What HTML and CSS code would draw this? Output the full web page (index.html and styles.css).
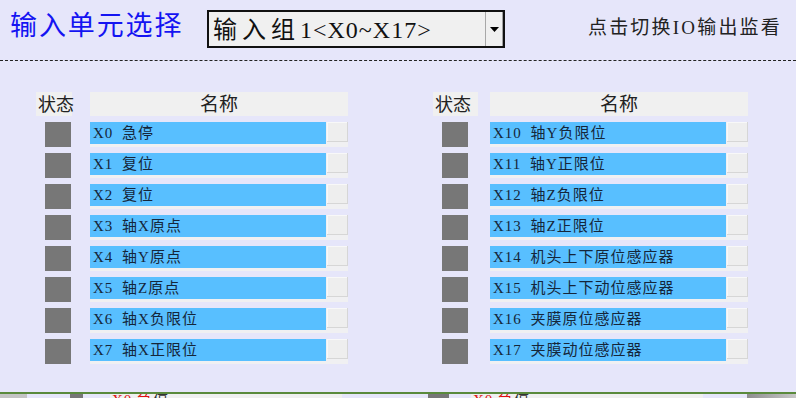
FILE: index.html
```html
<!DOCTYPE html>
<html lang="zh-CN">
<head>
<meta charset="utf-8">
<title>输入单元选择</title>
<link rel="stylesheet" href="styles.css">
</head>
<body>
<div class="page">
  <header class="topbar">
    <h1 class="title">输入单元选择</h1>
    <div class="select">
      <span class="select-text"><span class="sel-cjk">输入组</span><span class="sel-latin">1&lt;X0~X17&gt;</span></span>
      <span class="select-btn"><svg width="9" height="5" viewBox="0 0 9 5"><path d="M0 0H9L4.5 5Z" fill="#000"/></svg></span>
    </div>
    <div class="monitor">点击切换IO输出监看</div>
  </header>

  <main class="panels">
    <section class="panel panel-left">
      <div class="hd hd-status">状态</div><div class="hd hd-name">名称</div>
      <div class="lamp"></div><div class="name"><span class="bar">X0 急停</span><span class="btn"></span></div>
      <div class="lamp"></div><div class="name"><span class="bar">X1 复位</span><span class="btn"></span></div>
      <div class="lamp"></div><div class="name"><span class="bar">X2 复位</span><span class="btn"></span></div>
      <div class="lamp"></div><div class="name"><span class="bar">X3 轴X原点</span><span class="btn"></span></div>
      <div class="lamp"></div><div class="name"><span class="bar">X4 轴Y原点</span><span class="btn"></span></div>
      <div class="lamp"></div><div class="name"><span class="bar">X5 轴Z原点</span><span class="btn"></span></div>
      <div class="lamp"></div><div class="name"><span class="bar">X6 轴X负限位</span><span class="btn"></span></div>
      <div class="lamp"></div><div class="name"><span class="bar">X7 轴X正限位</span><span class="btn"></span></div>
    </section>
    <section class="panel panel-right">
      <div class="hd hd-status">状态</div><div class="hd hd-name">名称</div>
      <div class="lamp"></div><div class="name"><span class="bar">X10 轴Y负限位</span><span class="btn"></span></div>
      <div class="lamp"></div><div class="name"><span class="bar">X11 轴Y正限位</span><span class="btn"></span></div>
      <div class="lamp"></div><div class="name"><span class="bar">X12 轴Z负限位</span><span class="btn"></span></div>
      <div class="lamp"></div><div class="name"><span class="bar">X13 轴Z正限位</span><span class="btn"></span></div>
      <div class="lamp"></div><div class="name"><span class="bar">X14 机头上下原位感应器</span><span class="btn"></span></div>
      <div class="lamp"></div><div class="name"><span class="bar">X15 机头上下动位感应器</span><span class="btn"></span></div>
      <div class="lamp"></div><div class="name"><span class="bar">X16 夹膜原位感应器</span><span class="btn"></span></div>
      <div class="lamp"></div><div class="name"><span class="bar">X17 夹膜动位感应器</span><span class="btn"></span></div>
    </section>
  </main>

  <footer class="next">
    <span class="nx nx-gray w27"></span>
    <span class="nx w43"></span>
    <span class="nx nx-dark w13"></span>
    <span class="nx w27"></span>
    <span class="nx nx-light w232"><span class="red">X0 急</span>停</span>
    <span class="nx w86"></span>
    <span class="nx nx-dark w21"></span>
    <span class="nx w22"></span>
    <span class="nx nx-light w232"><span class="red">X0 急</span>停</span>
    <span class="nx w44"></span>
    <span class="nx nx-fade w49"></span>
  </footer>
</div>
</body>
</html>
```

FILE: styles.css
```css
html, body {
  margin: 0;
  padding: 0;
}

body {
  width: 796px;
  height: 398px;
  overflow: hidden;
  background: #e6e6fa;
  font-family: "Liberation Serif", "Noto Sans CJK SC", serif;
}

.page {
  display: flex;
  flex-direction: column;
  height: 398px;
}

/* ---------- top bar ---------- */
.topbar {
  display: flex;
  align-items: flex-start;
  height: 60px;
  padding-left: 10px;
  border-bottom: 1px dashed #222;
  flex: none;
}

.title {
  margin: 10px 0 0 0;
  width: 197px;
  font-family: "Noto Sans CJK SC", sans-serif;
  font-weight: normal;
  font-size: 27px;
  line-height: 28px;
  letter-spacing: 1.9px;
  color: #1414f2;
  white-space: nowrap;
}

.select {
  margin-top: 10px;
  width: 294px;
  height: 34px;
  border: 2px solid #111;
  background: #f0f0f0;
  display: flex;
  align-items: center;
}

.select-text {
  flex: 1;
  padding-left: 4px;
  font-size: 24px;
  line-height: 34px;
  color: #111;
  white-space: nowrap;
}

.sel-cjk {
  font-family: "Noto Sans CJK SC", sans-serif;
  letter-spacing: 5px;
}

.sel-latin {
  letter-spacing: 1px;
}

.select-btn {
  width: 18px;
  height: 34px;
  box-sizing: border-box;
  border-left: 1px solid #a8a8a8;
  border-right: 1px solid #a0a0a0;
  background: #f0f0f0;
  display: flex;
  align-items: center;
  justify-content: center;
}

.monitor {
  margin-left: auto;
  margin-right: 14px;
  margin-top: 18px;
  font-size: 19px;
  line-height: 20px;
  letter-spacing: 2.2px;
  color: #222;
  white-space: nowrap;
}

/* ---------- IO panels ---------- */
.panels {
  display: flex;
  align-items: flex-start;
  gap: 85px;
  padding: 31px 0 0 36px;
}

.panel {
  display: grid;
  grid-template-columns: 36px 258px;
  grid-template-rows: 24px;
  grid-auto-rows: 25px;
  column-gap: 18px;
  row-gap: 6px;
}

.panel-right {
  grid-template-columns: 45px 258px;
  column-gap: 12px;
}

.hd {
  background: #f0f0f0;
  font-family: "Noto Sans CJK SC", sans-serif;
  font-size: 18px;
  line-height: 20px;
  padding-top: 1px;
  color: #222;
  white-space: nowrap;
}

.hd-status {
  padding-left: 2px;
}

.hd-name {
  text-align: center;
  font-size: 19px;
}

.lamp {
  width: 26px;
  height: 25px;
  margin-left: 9px;
  background: #777777;
}

.name {
  display: flex;
  align-items: flex-start;
  gap: 1px;
  background: #f0f0f2;
}

.bar {
  width: 236px;
  height: 22px;
  box-sizing: border-box;
  padding-left: 3px;
  background: #58bfff;
  font-size: 15px;
  line-height: 22px;
  letter-spacing: 1px;
  word-spacing: 4px;
  color: #15263a;
  white-space: nowrap;
  overflow: hidden;
}

.btn {
  width: 21px;
  height: 20px;
  background: #eeeeee;
  box-shadow: inset -1px -1px 0 #d6d6d6, inset 1px 1px 0 #f8f8f8;
}

/* ---------- next panel, cut off at the bottom ---------- */
.next {
  margin-top: auto;
  height: 4px;
  border-top: 2px solid #5a8a3c;
  display: flex;
  overflow: hidden;
  flex: none;
}

.nx {
  display: block;
  height: 4px;
  flex: none;
  font-size: 15px;
  line-height: 12px;
  letter-spacing: 1px;
  color: #333;
  white-space: nowrap;
  overflow: hidden;
}

.nx-gray { background: #c4c4c4; }
.nx-dark { background: #777777; }
.nx-light { background: #f0f0f0; padding-left: 2px; box-sizing: border-box; }
.nx-fade { background: linear-gradient(to right, #8e8e8e, #c8c8c8); }
.red { color: #e01010; }

.w13 { width: 13px; }
.w21 { width: 21px; }
.w22 { width: 22px; }
.w27 { width: 27px; }
.w43 { width: 43px; }
.w44 { width: 44px; }
.w49 { width: 49px; }
.w86 { width: 86px; }
.w232 { width: 232px; }
```
